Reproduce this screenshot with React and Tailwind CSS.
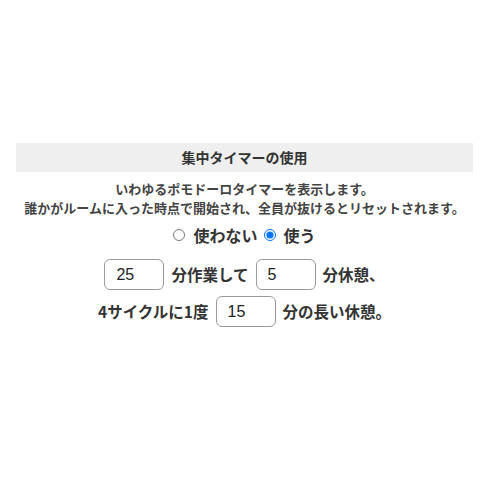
import React, { useState } from "react";

const inputCls =
  "w-[60px] h-[31px] border border-[#9a9a9a] rounded-[6px] px-[11px] text-[16px] font-normal text-[#222] bg-white";

const App = () => {
  const [enabled, setEnabled] = useState(true);
  const [work, setWork] = useState("25");
  const [rest, setRest] = useState("5");
  const [longRest, setLongRest] = useState("15");

  return (
    <div
      className="w-[500px] h-[500px] bg-white pt-[143px] text-[#333]"
      style={{ fontFamily: '"Noto Sans CJK JP", "Noto Sans", sans-serif' }}
    >
      <div className="ml-[16px] w-[457px]">
        <div className="h-[29px] bg-[#efefef] flex items-center justify-center text-[14px] font-bold">
          集中タイマーの使用
        </div>
        <div className="mt-[7px] text-center text-[13px] font-bold leading-[19px] text-[#444]">
          <div>いわゆるポモドーロタイマーを表示します。</div>
          <div>誰かがルームに入った時点で開始され、全員が抜けるとリセットされます。</div>
        </div>
        <div className="mt-[6px] flex items-center justify-center text-[16px] font-bold">
          <label className="flex items-center gap-[8px]">
            <input
              type="radio"
              checked={!enabled}
              onChange={() => setEnabled(false)}
              className="w-[12px] h-[12px] m-0"
            />
            使わない
          </label>
          <label className="flex items-center gap-[8px] ml-[6px]">
            <input
              type="radio"
              checked={enabled}
              onChange={() => setEnabled(true)}
              className="w-[12px] h-[12px] m-0"
            />
            使う
          </label>
        </div>
        <div className="mt-[12px] flex items-center justify-center gap-[7px] text-[15.5px] font-bold">
          <input
            value={work}
            onChange={(e) => setWork(e.target.value)}
            className={inputCls}
            style={{ fontFamily: '"Liberation Sans", Arial, sans-serif' }}
          />
          <span>分作業して</span>
          <input
            value={rest}
            onChange={(e) => setRest(e.target.value)}
            className={inputCls}
            style={{ fontFamily: '"Liberation Sans", Arial, sans-serif' }}
          />
          <span>分休憩、</span>
        </div>
        <div className="mt-[6px] flex items-center justify-center gap-[7px] text-[15.5px] font-bold">
          <span>4サイクルに1度</span>
          <input
            value={longRest}
            onChange={(e) => setLongRest(e.target.value)}
            className={inputCls}
            style={{ fontFamily: '"Liberation Sans", Arial, sans-serif' }}
          />
          <span>分の長い休憩。</span>
        </div>
      </div>
    </div>
  );
};

export default App;
